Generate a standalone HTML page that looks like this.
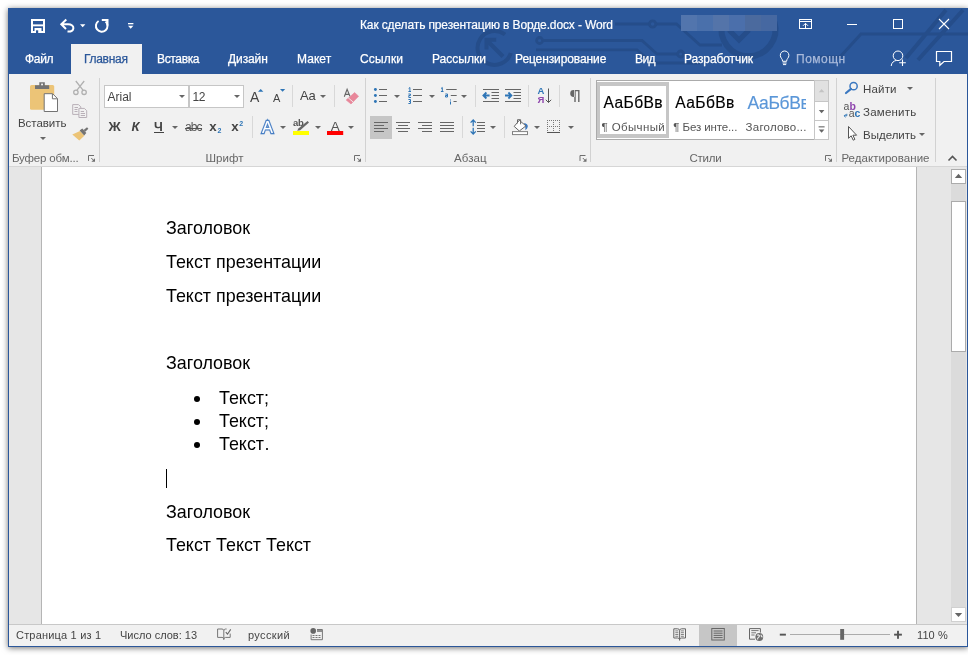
<!DOCTYPE html>
<html lang="ru">
<head>
<meta charset="utf-8">
<title>Word</title>
<style>
*{box-sizing:border-box;margin:0;padding:0}
html,body{width:968px;height:655px;overflow:hidden;background:#fff}
body{font-family:"Liberation Sans",sans-serif;font-size:12px;color:#444;position:relative}
.abs{position:absolute}
#shadow{position:absolute;left:8px;top:8px;width:960px;height:639px;box-shadow:0 1px 6px 0 rgba(0,0,0,.56)}
#win{position:absolute;left:8px;top:8px;width:960px;height:639px;background:#2b579a;overflow:hidden}
#c{position:absolute;left:-8px;top:-8px;width:968px;height:655px;will-change:transform}
#c div,#c svg{position:absolute}
.tt{-webkit-text-stroke:.2px currentColor;color:#fff;white-space:nowrap;font-size:12px;line-height:14px;letter-spacing:-0.13px}
.tab{top:51px;-webkit-text-stroke:.25px currentColor;color:#fff;font-size:12px;line-height:16px;white-space:nowrap;letter-spacing:-0.1px}
#acttab{left:71px;top:44px;width:71px;height:31px;background:#f1f1f1}
#ribbon{left:9px;top:74px;width:958px;height:93px;background:#f1f1f1;border-bottom:1px solid #d6d6d6}
.sep{width:1px;background:#d4d4d4}
.glabel{top:151px;font-size:11.5px;line-height:14px;color:#666;white-space:nowrap}
.rt{font-size:11.5px;line-height:14px;color:#444;white-space:nowrap;letter-spacing:0}
.dd{width:0;height:0;border-left:3px solid transparent;border-right:3px solid transparent;border-top:3px solid #666}
#doc{left:9px;top:167px;width:958px;height:457px;background:#e6e6e6}
#page{left:41px;top:167px;width:876px;height:457px;background:#fff;border-left:1px solid #b5b5b5;border-right:1px solid #b5b5b5}
.dl{left:166px;font-size:17.9px;line-height:22px;color:#000;white-space:nowrap}
.bl{width:6.8px;height:6.8px;border-radius:3.4px;background:#000;left:193.7px;margin-top:-.4px}
#status{left:9px;top:624px;width:958px;height:22px;background:#f1f1f1;border-top:1px solid #c8c8c8}
.st{top:628px;font-size:11px;line-height:14px;color:#444;white-space:nowrap}
svg{overflow:visible}
</style>
</head>
<body>
<div id="shadow"></div>
<div id="win"><div id="c">
<!-- TITLE -->
<svg id="pattern" style="left:0;top:0" width="968" height="74" viewBox="0 0 968 74" fill="none" stroke="#254d8a" stroke-width="2.8">
<path d="M505 34.5 A17 17 0 1 0 510.8 53" stroke-width="4"/>
<path d="M503 56.5 L487.5 41 M486.5 49.5 V39.8 H496.2" stroke-width="4"/>
<circle cx="539.6" cy="40.5" r="3"/>
<path d="M542.6 40.5 H642 L657 54 H677.5"/>
<circle cx="680.7" cy="54" r="3"/>
<path d="M536 49.8 H637 L652 63 H700"/>
<path d="M615 24 H649.5 M655.8 24 H676.5 L700 45 H722"/>
<circle cx="652.6" cy="24" r="3.2"/>
<path d="M774.5 22 A27 27 0 1 1 722.5 22" stroke-width="6"/>
<path d="M729 30 L739 40 L749 30" stroke-width="5"/>
<path d="M816 57 L840 57 L861 34 H968" stroke-width="3"/>
<path d="M906 58 L946 10 M918 60 L963 10" stroke-width="4"/>
</svg>
<div id="acttab"></div>
<div class="tt" style="left:360px;top:18px">Как сделать презентацию в Ворде.docx - Word</div>
<div style="left:681px;top:15px;width:96px;height:16px;background:linear-gradient(90deg,#5275ad 0 16px,#4a70ab 16px 32px,#5474a9 32px 48px,#4b6fab 48px 64px,#4b6a9e 64px 80px,#4668a1 80px 96px)"></div>
<div class="tab" style="left:25px;letter-spacing:-0.3px">Файл</div>
<div class="tab" style="left:84px;color:#2b579a;letter-spacing:-0.3px">Главная</div>
<div class="tab" style="left:157px;letter-spacing:-0.35px">Вставка</div>
<div class="tab" style="left:228px;letter-spacing:-0.1px">Дизайн</div>
<div class="tab" style="left:297px;letter-spacing:0.05px">Макет</div>
<div class="tab" style="left:360px;letter-spacing:0.15px">Ссылки</div>
<div class="tab" style="left:432px;letter-spacing:0px">Рассылки</div>
<div class="tab" style="left:515px;letter-spacing:-0.1px">Рецензирование</div>
<div class="tab" style="left:635px;letter-spacing:-0.6px">Вид</div>
<div class="tab" style="left:684px;letter-spacing:-0.1px">Разработчик</div>
<div class="tab" style="left:796px;color:#a9badb;letter-spacing:.5px">Помощн</div>
<!--QAT-->
<svg style="left:0;top:0" width="968" height="74" viewBox="0 0 968 74" fill="none" stroke="#fff" stroke-width="1">
<!-- save -->
<rect x="32" y="20" width="12" height="12" stroke-width="2"/>
<rect x="32" y="24.4" width="12" height="1.9" fill="#fff" stroke="none"/>
<rect x="34.5" y="28" width="7" height="5" fill="#fff" stroke="none"/>
<rect x="36" y="30.3" width="2.2" height="2.7" fill="#2b579a" stroke="none"/>
<!-- undo -->
<path d="M66.3 19.6 L61.3 24.3 L66 29 M61.5 24.3 H68 C75.5 24.3 75 32 67.5 31.6" stroke-width="2" stroke-linejoin="miter"/>
<path d="M80 24.2h5.4l-2.7 3z" fill="#fff" stroke="none"/>
<!-- redo/repeat -->
<path d="M105.6 21.6 A5.8 5.8 0 1 1 98.6 21" stroke-width="2"/>
<path d="M101.8 19.9 H107.5 V25.6" stroke-width="2"/>
<!-- customize -->
<rect x="128" y="23" width="5.4" height="1.3" fill="#fff" stroke="none"/>
<path d="M128 25.8h5.4l-2.7 3z" fill="#fff" stroke="none"/>
<!-- ribbon display options -->
<rect x="799.5" y="19.5" width="12" height="9"/>
<path d="M799.5 21.5 H811.5 M805.5 23.5 V28 M803 25.8 L805.5 23.3 L808 25.8"/>
<!-- minimize -->
<path d="M847 24.5 H857"/>
<!-- maximize -->
<rect x="893.5" y="19.5" width="9" height="9"/>
<!-- close -->
<path d="M939 19 L949 29 M949 19 L939 29" stroke-width="1.1"/>
<!-- bulb -->
<path d="M782.6 61.3 C782.6 58.5 780.3 58.2 780.3 55.3 A4.3 4.3 0 0 1 788.9 55.3 C788.9 58.2 786.6 58.5 786.6 61.3 Z M782.6 63 H786.6 M783 64.6 H786.2" stroke="#fff" stroke-width="1"/>
<!-- share -->
<circle cx="898" cy="55.8" r="4.8"/>
<path d="M891.2 66 C891.4 62.5 894 60.8 896.5 60.4"/>
<path d="M902.5 59.5 V66 M899.2 62.7 H905.8" stroke-width="1.1"/>
<!-- comment -->
<path d="M936.5 51.5 H951.5 V61.5 H944 L939.8 65.3 V61.5 H936.5 Z" stroke-width="1.2"/>
</svg>
<!--/QAT-->
<!--WBTNS-->
<!-- RIBBON -->
<div id="ribbon"></div>
<!--RIBBONCONTENT-->
<style>
.tri{width:0;height:0;border-left:3px solid transparent;border-right:3px solid transparent;border-top:3px solid #666;margin-left:-.4px}
.fb{font-weight:bold;font-size:13px;line-height:14px;color:#444;white-space:nowrap}
.box{background:#fff;border:1px solid #c6c6c6}
.sty{-webkit-text-stroke:.15px currentColor;font-size:15.6px;line-height:18px;color:#000;white-space:nowrap;letter-spacing:.4px}
.vs{width:1px;background:#d8d8d8}
.gs{width:1px;background:#d2d2d2;top:78px;height:84px}
.gl{top:150.6px;font-size:11.5px;line-height:14px;color:#666;white-space:nowrap;letter-spacing:.05px}
</style>
<!-- CLIPBOARD GROUP -->
<svg style="left:0;top:74px" width="968" height="92" viewBox="0 74 968 92" fill="none">
<!-- paste -->
<rect x="30" y="85" width="24.2" height="24.7" rx="1.5" fill="#ecc477"/>
<path d="M35 85.2 H39.3 V82.2 H44.8 V85.2 H49.2 V88.9 H35 Z" fill="#737373"/>
<rect x="41.1" y="83.6" width="1.9" height="1.7" fill="#f1f1f1"/>
<path d="M44.2 93.7 H52.6 L57.5 98.6 V111.5 H44.2 Z" fill="#fff" stroke="#737373" stroke-width="1"/>
<path d="M52.4 93.9 V98.8 H57.3" stroke="#737373" stroke-width="1"/>
<!-- cut -->
<g stroke="#b0b0b0" stroke-width="1.3">
<path d="M75.8 81 L83.2 90.3 M84.2 81 L76.8 90.3"/>
<circle cx="75.9" cy="92.3" r="2.2"/><circle cx="84.1" cy="92.3" r="2.2"/>
</g>
<!-- copy -->
<g stroke="#b9b0b8" stroke-width="1" fill="#f1f1f1">
<path d="M72.7 104.6 H78.5 L80.8 106.9 V114.4 H72.7 Z"/>
<path d="M78.9 108.4 H84.4 L86.7 110.7 V117.5 H78.9 Z"/>
<path d="M74.5 107.5 H78 M74.5 109.5 H77.5 M74.5 111.5 H77.5 M80.7 111.5 H84 M80.7 113.5 H85 M80.7 115.5 H85" fill="none"/>
</g>
<!-- format painter -->
<path d="M72.3 134.6 L80 131 L84.3 135.8 L79.3 140.6 Z" fill="#ecc477"/>
<path d="M79.6 130.6 L82.3 128.6 L86.3 133 L84.2 135.6 Z" fill="#737373"/>
<path d="M83.6 130 L87 127.2 L88.4 128.8 L85.2 131.8 Z" fill="#737373"/>
</svg>
<div class="rt" style="left:18px;top:116px;letter-spacing:-.05px">Вставить</div>
<div class="tri" style="left:40px;top:137px"></div>
<div class="gl" style="left:12px;letter-spacing:-.17px">Буфер обм...</div>
<div class="gs" style="left:99px"></div>
<!-- FONT GROUP -->
<div class="box" style="left:104px;top:85px;width:85px;height:23px"></div>
<div class="box" style="left:189px;top:85px;width:55px;height:23px"></div>
<div class="rt" style="left:107.5px;top:90px;font-size:12px">Arial</div>
<div class="rt" style="left:192.5px;top:90px;font-size:12px;letter-spacing:-.5px">12</div>
<div class="tri" style="left:179px;top:95px"></div>
<div class="tri" style="left:234px;top:95px"></div>
<div class="fb" style="left:108.5px;top:120px;font-size:13.5px">Ж</div>
<div class="fb" style="left:131.5px;top:120px;font-style:italic;font-size:13px">К</div>
<div class="fb" style="left:154px;top:120px;font-weight:bold;font-size:12.5px">Ч</div>
<div style="left:154px;top:132px;width:9.5px;height:1px;background:#444"></div>
<div class="tri" style="left:172.7px;top:126px"></div>
<div class="rt" style="left:185px;top:120px;font-size:12px;letter-spacing:-.9px;color:#555">abc</div>
<div style="left:184.5px;top:127.5px;width:17.5px;height:1px;background:#555"></div>
<div class="fb" style="left:209.3px;top:120.3px;font-size:13.3px">x</div>
<div class="fb" style="left:217.5px;top:126.5px;font-size:7px;line-height:8px;color:#2e75b6">2</div>
<div class="fb" style="left:231.3px;top:120.3px;font-size:13.3px">x</div>
<div class="fb" style="left:239.3px;top:119.5px;font-size:7px;line-height:8px;color:#2e75b6">2</div>
<div class="rt" style="left:250px;top:89px;font-size:14px;line-height:16px">A</div>
<div class="rt" style="left:273px;top:91px;font-size:11px;line-height:14px">A</div>
<div class="rt" style="left:300px;top:88.5px;font-size:13px;line-height:14px;letter-spacing:-.1px">Aa</div>
<div class="tri" style="left:320px;top:95px"></div>
<div class="vs" style="left:292px;top:85px;height:22px"></div>
<div class="vs" style="left:334px;top:85px;height:22px"></div>
<div class="vs" style="left:252px;top:116px;height:22px"></div>
<div class="tri" style="left:280px;top:126px"></div>
<div class="tri" style="left:315px;top:126px"></div>
<div class="tri" style="left:348.8px;top:126px"></div>
<svg style="left:0;top:74px" width="968" height="92" viewBox="0 74 968 92" fill="none">
<path d="M258 91.8 H263.4 L260.7 89 Z" fill="#2e75b6"/>
<path d="M280 89 H285.2 L282.6 91.8 Z" fill="#2e75b6"/>
<!-- clear formatting -->
<path d="M354.6 92.6 L358.6 96.2 L351 104 L346.2 100 Z" fill="#e8879a" stroke="#e8879a" stroke-width=".6" stroke-linejoin="round"/>
<path d="M348.2 97.8 L353 101.9" stroke="#f1f1f1" stroke-width="0.9"/>
<path d="M344.3 96.8 L347.1 89.3 L349.9 96.3 M345.2 94.4 H349" stroke="#666" stroke-width="1.1"/>
<!-- highlight -->
<rect x="293" y="131" width="16" height="4" fill="#ffff00"/>
<path d="M307.6 121 L309 122.4 L300.2 130.2 L297.2 130.8 L298.4 128.6 Z" fill="#666"/>
<!-- font color -->
<rect x="327" y="131" width="16.2" height="4" fill="#ff0000"/>
</svg>
<div class="rt" style="left:293px;top:117.5px;font-size:9.5px;line-height:10px;font-weight:bold;color:#555;letter-spacing:-.3px">ab</div>
<div class="rt" style="left:330.7px;top:118.5px;font-size:13.5px;line-height:16px;color:#555">A</div>
<div style="left:262px;top:117px;font-size:16.5px;line-height:20px;color:#fff;-webkit-text-stroke:2.4px #3f78c0;paint-order:stroke fill;text-shadow:0 0 2px #8db1e0;transform:scaleX(1.0);transform-origin:0 0">A</div>
<div class="gl" style="left:205.4px">Шрифт</div>
<div class="gs" style="left:365px"></div>
<!--R2-->
<!-- PARAGRAPH GROUP -->
<div style="left:370px;top:116px;width:22px;height:23px;background:#c6c6c6"></div>
<svg style="left:0;top:74px" width="968" height="92" viewBox="0 74 968 92" fill="none" shape-rendering="auto">
<!-- bullets -->
<g fill="#2e75b6"><circle cx="375.4" cy="89.5" r="1.45"/><circle cx="375.4" cy="95.5" r="1.45"/><circle cx="375.4" cy="101.5" r="1.45"/></g>
<path d="M379 89.5 H387 M379 95.5 H387 M379 101.5 H387" stroke="#666" stroke-width="1"/>
<!-- numbering -->
<path d="M413 89.5 H422 M413 95.5 H422 M413 101.5 H422" stroke="#666" stroke-width="1"/>
<g stroke="#2e75b6" stroke-width="1">
<path d="M408.6 88.6 L409.9 87.5 V91.5 M408.4 91.5 H411"/>
<path d="M408.4 94 H410.4 V95.5 H408.8 V97.5 H411"/>
<path d="M408.4 99.5 H410.5 V101.5 H409 M410.5 101.5 V103.5 H408.4"/>
</g>
<!-- multilevel -->
<path d="M446.2 89.5 H456.7 M450.8 95.5 H456.7 M453.5 101.5 H456.7" stroke="#666" stroke-width="1"/>
<g stroke="#2e75b6" stroke-width="1">
<path d="M441 88.6 L442.3 87.5 V91.5 M440.9 91.5 H443.5"/>
<path d="M445.3 94 H447.5 V97 H445.5 V95.5 H447.5"/>
<path d="M450.5 99.5 V100.5 M450.5 101.5 V104.5"/>
</g>
<!-- decrease indent -->
<path d="M483 89.5 H499 M491.5 92.5 H499 M491.5 95.5 H499 M491.5 98.5 H499 M483 101.5 H499" stroke="#666" stroke-width="1"/>
<path d="M484 95.5 H489.6 M486.4 92.5 L483.4 95.5 L486.4 98.5" stroke="#2e75b6" stroke-width="1.8"/>
<!-- increase indent -->
<path d="M505 89.5 H521 M513.5 92.5 H521 M513.5 95.5 H521 M513.5 98.5 H521 M505 101.5 H521" stroke="#666" stroke-width="1"/>
<path d="M505 95.5 H510.8 M508.4 92.5 L511.4 95.5 L508.4 98.5" stroke="#2e75b6" stroke-width="1.8"/>
<!-- sort arrow -->
<path d="M548.5 88.5 V102.4 M545.8 99.8 L548.5 102.5 L551.2 99.8" stroke="#555" stroke-width="1"/>
<!-- align left -->
<path d="M374 122.5 H388 M374 125.5 H384 M374 128.5 H388 M374 131.5 H384" stroke="#666" stroke-width="1"/>
<path d="M396 122.5 H410 M398 125.5 H408 M396 128.5 H410 M398 131.5 H408" stroke="#666" stroke-width="1"/>
<path d="M418 122.5 H432 M422 125.5 H432 M418 128.5 H432 M422 131.5 H432" stroke="#666" stroke-width="1"/>
<path d="M440 122.5 H454 M440 125.5 H454 M440 128.5 H454 M440 131.5 H454" stroke="#666" stroke-width="1"/>
<!-- line spacing -->
<path d="M477 122.5 H485 M477 125.5 H485 M477 128.5 H485 M477 131.5 H485" stroke="#666" stroke-width="1"/>
<path d="M473.2 120 V126.2 M473.2 127.8 V134 M470.6 122.6 L473.2 120 L475.8 122.6 M470.6 131.4 L473.2 134 L475.8 131.4" stroke="#2e75b6" stroke-width="1.3"/>
<!-- shading -->
<path d="M524 123 Q527.9 123.6 527.8 126.6 Q527.6 128.6 525.4 130.2 Q525.6 127.5 525 126.5 Z" fill="#3b78c0"/>
<path d="M519.3 120.3 L525.9 125.9 L519.3 131 L514.2 126.4 Z" fill="#fff" stroke="#666" stroke-width="1"/>
<path d="M517.5 123.4 V119.7 H520.6 V124.3" stroke="#666" stroke-width="1"/>
<rect x="512.5" y="131.6" width="15" height="3" fill="#fff" stroke="#808080" stroke-width="1"/>
<!-- borders -->
<g stroke="#777" stroke-width="1" stroke-dasharray="1 1">
<path d="M547 120.5 H560 M547 126.5 H560 M547.5 120 V132 M553.5 120 V132 M559.5 120 V132"/>
</g>
<path d="M547 132.5 H560" stroke="#555" stroke-width="1"/>
</svg>
<div class="tri" style="left:394.8px;top:95px"></div>
<div class="tri" style="left:429px;top:95px"></div>
<div class="tri" style="left:461px;top:95px"></div>
<div class="tri" style="left:490px;top:126px"></div>
<div class="tri" style="left:534px;top:126px"></div>
<div class="tri" style="left:568px;top:126px"></div>
<div class="vs" style="left:475px;top:85px;height:22px"></div>
<div class="vs" style="left:528px;top:85px;height:22px"></div>
<div class="vs" style="left:559px;top:85px;height:22px"></div>
<div class="vs" style="left:462px;top:116px;height:22px"></div>
<div class="vs" style="left:504px;top:116px;height:22px"></div>
<div class="fb" style="left:537.6px;top:86px;font-size:9.5px;line-height:10px;color:#2e75b6">A</div>
<div class="fb" style="left:537.6px;top:94.8px;font-size:9.5px;line-height:10px;color:#8e44ad">Я</div>
<svg style="left:0;top:74px" width="968" height="92" viewBox="0 74 968 92"><path d="M575 90.1 H573.6 A3.4 3.4 0 0 0 573.6 96.9 H575 Z M574.3 90.1 H579.5 V101.9 H578.1 V91.3 H575.7 V101.9 H574.3 Z" fill="#666"/></svg>
<div class="gl" style="left:454px;letter-spacing:.1px">Абзац</div>
<div class="gs" style="left:590px"></div>
<!-- STYLES GROUP -->
<div style="left:596px;top:80px;width:233px;height:60px;background:#fff;border:1px solid #ababab"></div>
<div style="left:597px;top:82px;width:72px;height:56px;border:solid #c6c6c6;border-width:4px 3px"></div>
<div class="sty" style="left:603.5px;top:94.3px">АаБбВв</div>
<div class="sty" style="left:675.3px;top:94.3px">АаБбВв</div>
<div style="left:746px;top:92px;width:60.3px;height:22px;overflow:hidden"><div class="sty" style="left:1.5px;top:0;font-size:17.5px;line-height:22px;color:#5a96d8;letter-spacing:-.35px">АаБбВв</div></div>
<div class="rt" style="left:601.5px;top:120px;color:#555;letter-spacing:.38px">¶ Обычный</div>
<div class="rt" style="left:673.3px;top:120px;color:#555;letter-spacing:-.11px">¶ Без инте...</div>
<div class="rt" style="left:745.6px;top:120px;color:#555;letter-spacing:.22px">Заголово...</div>
<div style="left:814px;top:80px;width:15px;height:22px;background:#e1e1e1;border:1px solid #c6c6c6"></div>
<div style="left:814px;top:101px;width:15px;height:20px;background:#fff;border:1px solid #c6c6c6"></div>
<div style="left:814px;top:120px;width:15px;height:20px;background:#fff;border:1px solid #c6c6c6"></div>
<svg style="left:0;top:74px" width="968" height="92" viewBox="0 74 968 92" fill="none">
<path d="M818.8 92.2 H824.4 L821.6 89 Z" fill="#c3c3c3"/>
<path d="M818.8 110 H824.4 L821.6 113.2 Z" fill="#666"/>
<path d="M818.8 129.6 H824.4 L821.6 132.8 Z" fill="#666"/>
<rect x="818.6" y="126.3" width="6" height="1.1" fill="#666"/>
</svg>
<div class="gl" style="left:689.5px;letter-spacing:-.27px">Стили</div>
<div class="gs" style="left:836px"></div>
<!-- EDITING GROUP -->
<svg style="left:0;top:74px" width="968" height="92" viewBox="0 74 968 92" fill="none">
<circle cx="853.6" cy="86.2" r="3.6" stroke="#3b78c0" stroke-width="1.5"/>
<path d="M851 88.9 L846 93" stroke="#3b78c0" stroke-width="2.2" stroke-linecap="round"/>
<path d="M846.8 113.8 V115.8 H844.3 M845.5 114.4 L844.1 115.8 L845.5 117.2" stroke="#2e75b6" stroke-width="1"/>
<path d="M848.5 126.5 V138.3 L851.2 135.8 L853.2 140.2 L854.9 139.4 L852.9 135.2 H856.6 Z" fill="#fff" stroke="#555" stroke-width="1" stroke-linejoin="miter"/>
</svg>
<div class="rt" style="left:843.6px;top:100.3px;font-size:10.5px;line-height:12px;color:#555">a</div>
<div class="rt" style="left:849.6px;top:100.3px;font-size:10.5px;line-height:12px;color:#8e44ad;font-weight:bold">b</div>
<div class="rt" style="left:848.8px;top:107.2px;font-size:10.5px;line-height:12px;color:#555">a</div>
<div class="rt" style="left:854.6px;top:107.2px;font-size:10.5px;line-height:12px;color:#2e75b6;font-weight:bold">c</div>
<div class="rt" style="left:863px;top:82px;letter-spacing:.18px">Найти</div>
<div class="rt" style="left:863px;top:105px;letter-spacing:.22px">Заменить</div>
<div class="rt" style="left:863px;top:127.5px;letter-spacing:0">Выделить</div>
<div class="tri" style="left:907px;top:87px"></div>
<div class="tri" style="left:919px;top:133px"></div>
<div class="gl" style="left:841.4px;letter-spacing:.04px">Редактирование</div>
<div class="gs" style="left:935px"></div>
<svg style="left:0;top:74px" width="968" height="92" viewBox="0 74 968 92" fill="none">
<path d="M948.5 160.5 L952.5 156.5 L956.5 160.5" stroke="#555" stroke-width="1.6"/>
<g><path d="M88.5 160.9 V155.5 H94" stroke="#6e6e6e" stroke-width="1"/><path d="M95 158.2 V161.8 H91.4 Z" fill="#6e6e6e"/><path d="M91.3 158 L94 160.8" stroke="#6e6e6e" stroke-width="1"/></g>
<g transform="translate(266 0)"><path d="M88.5 160.9 V155.5 H94" stroke="#6e6e6e" stroke-width="1"/><path d="M95 158.2 V161.8 H91.4 Z" fill="#6e6e6e"/><path d="M91.3 158 L94 160.8" stroke="#6e6e6e" stroke-width="1"/></g>
<g transform="translate(491.5 0)"><path d="M88.5 160.9 V155.5 H94" stroke="#6e6e6e" stroke-width="1"/><path d="M95 158.2 V161.8 H91.4 Z" fill="#6e6e6e"/><path d="M91.3 158 L94 160.8" stroke="#6e6e6e" stroke-width="1"/></g>
<g transform="translate(737 0)"><path d="M88.5 160.9 V155.5 H94" stroke="#6e6e6e" stroke-width="1"/><path d="M95 158.2 V161.8 H91.4 Z" fill="#6e6e6e"/><path d="M91.3 158 L94 160.8" stroke="#6e6e6e" stroke-width="1"/></g>
</svg>
<!--/R2-->
<!-- DOC -->
<div id="doc"></div>
<div id="page"></div>
<div class="dl" style="top:217px">Заголовок</div>
<div class="dl" style="top:251px">Текст презентации</div>
<div class="dl" style="top:285px">Текст презентации</div>
<div class="dl" style="top:352px">Заголовок</div>
<div class="dl" style="top:387px;left:219px">Текст;</div>
<div class="dl" style="top:410px;left:219px">Текст;</div>
<div class="dl" style="top:433px;left:219px">Текст<span style="margin-left:.5px">.</span></div>
<div class="bl" style="top:396px"></div>
<div class="bl" style="top:419px"></div>
<div class="bl" style="top:442px"></div>
<div style="left:166px;top:469px;width:1px;height:19px;background:#000"></div>
<div class="dl" style="top:501px">Заголовок</div>
<div class="dl" style="top:534px">Текст Текст Текст</div>
<!--VSCROLL-->
<div style="left:951px;top:167px;width:15px;height:457px;background:#dbdbdb"></div>
<div style="left:951px;top:167px;width:15px;height:2px;background:#e6e6e6"></div>
<div style="left:951px;top:622px;width:15px;height:2px;background:#e6e6e6"></div>
<div style="left:951px;top:169px;width:15px;height:15px;background:#fff;border:1px solid #ababab"></div>
<div style="left:951px;top:201px;width:15px;height:151px;background:#fff;border:1px solid #ababab"></div>
<div style="left:951px;top:607px;width:15px;height:15px;background:#fff;border:1px solid #d0d0d0"></div>
<svg style="left:0;top:160px" width="968" height="470" viewBox="0 160 968 470">
<path d="M954.8 177.9 H962.2 L958.5 173.8 Z" fill="#666"/>
<path d="M954.8 613 H962.2 L958.5 617.1 Z" fill="#666"/>
</svg>

<!-- STATUS -->
<div id="status"></div>
<div class="st" style="left:16px;letter-spacing:.19px">Страница 1 из 1</div>
<div class="st" style="left:120px;letter-spacing:0">Число слов: 13</div>
<div class="st" style="left:248px;letter-spacing:.36px">русский</div>
<div class="st" style="left:917px;letter-spacing:.08px">110 %</div>
<!--STATUSICONS-->
<div style="left:699px;top:625px;width:38px;height:21px;background:#c6c6c6"></div>
<svg style="left:0;top:620px" width="968" height="35" viewBox="0 620 968 35" fill="none" stroke="#777" stroke-width="1">
<!-- proofing book -->
<path d="M217.6 629 H222 Q223.6 629 223.8 630.6 V638.8 Q223.4 637.4 222 637.4 H217.6 Z"/>
<path d="M223.9 630.6 Q224.1 629 225.6 629 H226.6 M230.2 633.6 V637.4 H225.6 Q224.2 637.4 223.9 638.8 M223.8 638.2 V640"/>
<path d="M225.8 632.2 L227.5 634.2 L230.7 629.4" stroke="#666" stroke-width="1.1"/>
<!-- macro -->
<circle cx="313.2" cy="630.9" r="2.8" fill="#666" stroke="none"/>
<path d="M317 629.5 H322.4 V639.7 H311.1 V634.5"/>
<path d="M317 631 H322" stroke-width="1.6"/>
<path d="M312.5 635.5 H314.5 M315.5 635.5 H317.5 M318.5 635.5 H320.5 M312.5 637.5 H314.5 M315.5 637.5 H317.5 M318.5 637.5 H320.5" stroke="#777"/>
<!-- read mode -->
<path d="M673.8 628.8 H677.6 Q679.3 628.8 679.6 630.4 Q679.9 628.8 681.6 628.8 H685.5 V638 H681.6 Q679.9 638 679.6 639.4 Q679.3 638 677.6 638 H673.8 Z M679.6 630.4 V640.6" stroke="#666"/>
<path d="M675.3 630.9 H678.3 M675.3 632.7 H678.3 M675.3 634.5 H678.3 M675.3 636.3 H678.3 M680.9 630.9 H683.9 M680.9 632.7 H683.9 M680.9 634.5 H683.9 M680.9 636.3 H683.9" stroke="#777" stroke-width=".9"/>
<!-- print layout -->
<rect x="711.8" y="628.5" width="12.5" height="11.5" stroke="#666"/>
<path d="M713.6 631 H722.6 M713.6 633.2 H722.6 M713.6 635.4 H722.6 M713.6 637.6 H722.6" stroke="#666"/>
<!-- web layout -->
<path d="M755 639.2 H749.5 V628.6 H760.4 V632.6" stroke="#666"/>
<path d="M751.3 630.6 H758.6 M751.3 632.8 H756 M751.3 635 H754.6" stroke="#777"/>
<circle cx="759.3" cy="637" r="3.9" fill="#6e6e6e" stroke="none"/>
<path d="M757 635.4 Q758.4 634.4 759.4 635.6 Q759.6 637 758.2 637.6 Q757.2 638.4 757.8 639.6 M761 634.8 Q761 636.4 762.4 637.2" stroke="#f1f1f1" stroke-width="1.1"/>
<!-- zoom slider -->
<rect x="779.8" y="633.7" width="6.1" height="1.9" fill="#555" stroke="none"/>
<rect x="790" y="634" width="100" height="1" fill="#ababab" stroke="none"/>
<rect x="840.2" y="629" width="3.9" height="10.8" fill="#666" stroke="none"/>
<rect x="894.1" y="633.7" width="7.8" height="1.9" fill="#555" stroke="none"/>
<rect x="897.05" y="630.8" width="1.9" height="8" fill="#555" stroke="none"/>
</svg>

<!-- BORDERS -->
<div style="left:8px;top:74px;width:1px;height:573px;background:#2b579a"></div>
<div style="left:967px;top:74px;width:1px;height:573px;background:#2b579a"></div>
<div style="left:8px;top:646px;width:960px;height:1px;background:#2b579a"></div>
</div></div>
</body>
</html>
